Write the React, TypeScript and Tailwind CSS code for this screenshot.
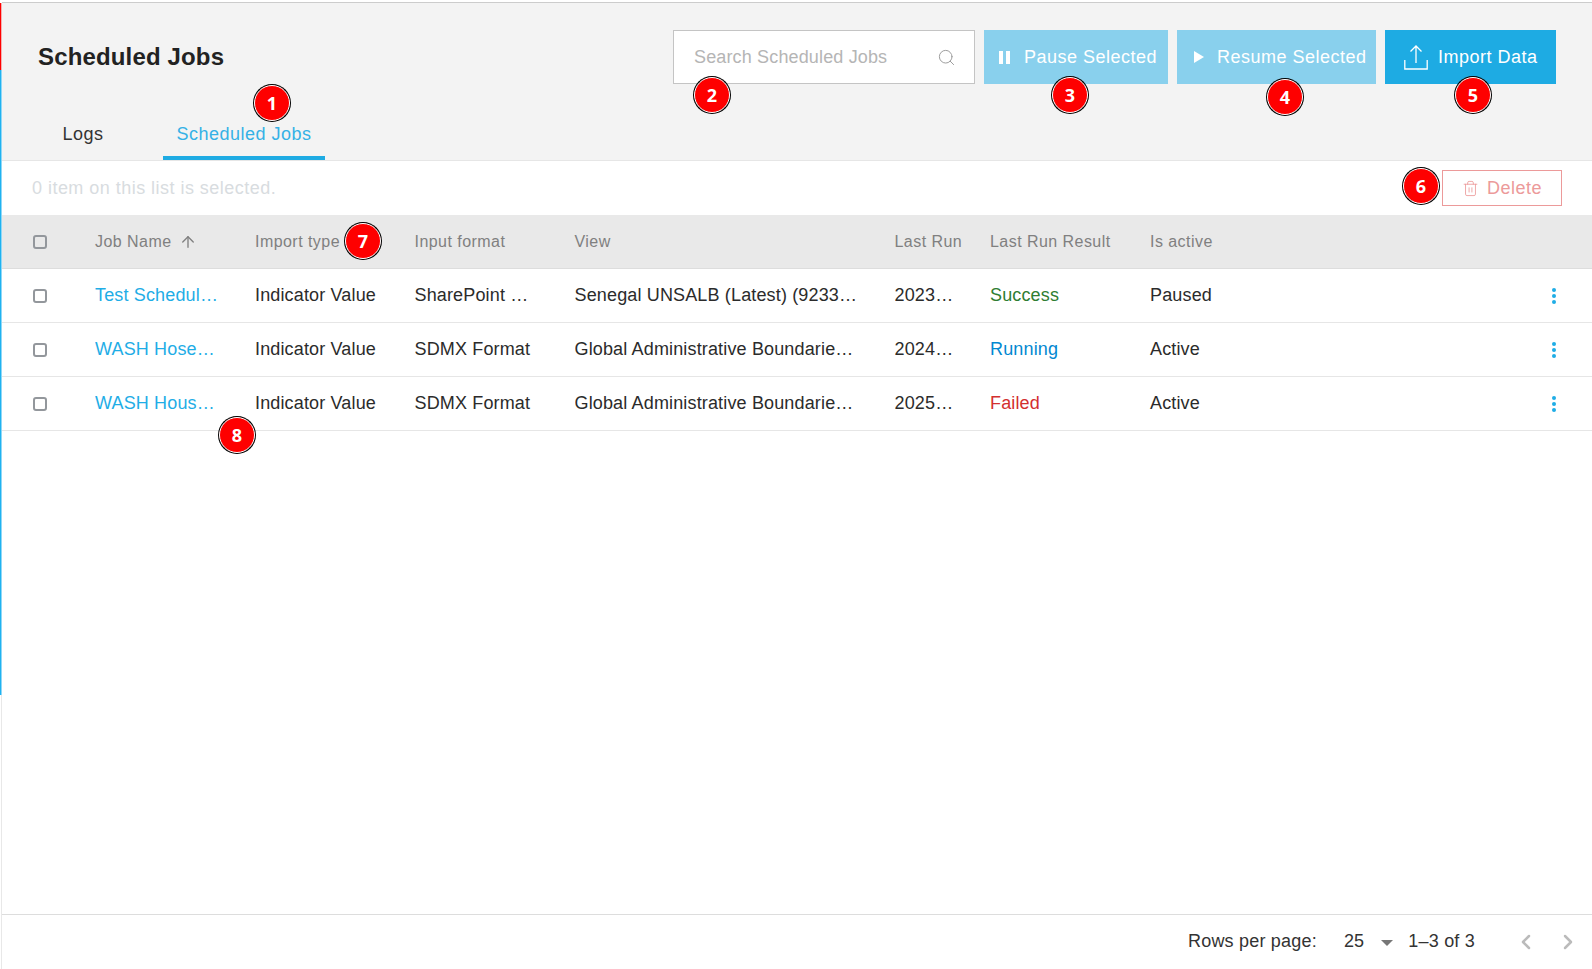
import { ArrowUp, ChevronLeft, ChevronRight, Search, Trash2 } from 'lucide-react'

const rows = [
    { name: 'Test Scheduled Job', format: 'SharePoint Online', view: 'Senegal UNSALB (Latest) (92331234)', run: '2023-11-02', result: 'Success', color: 'text-[#2e7d32]', active: 'Paused' },
    { name: 'WASH Hosehold Survey', format: 'SDMX Format', view: 'Global Administrative Boundaries (Latest)', run: '2024-05-14', result: 'Running', color: 'text-[#0288d1]', active: 'Active' },
    { name: 'WASH Household Survey', format: 'SDMX Format', view: 'Global Administrative Boundaries (Latest)', run: '2025-01-20', result: 'Failed', color: 'text-[#d32f2f]', active: 'Active' },
]

function Badge({ n, className }: { n: number; className: string }) {
    return (
        <div className={`absolute flex h-[36px] w-[36px] items-center justify-center rounded-full border border-white bg-[#fe0000] font-['Open_Sans'] text-[18px] font-bold tracking-normal text-white ring-1 ring-black ${className}`}>
            {n}
        </div>
    )
}

function Checkbox() {
    return <div className="h-[14px] w-[14px] rounded-[3px] border-2 border-[#93979c]" />
}

export default function App() {
    return (
        <div className="relative flex h-[969px] w-[1592px] overflow-hidden bg-white font-['Liberation_Sans',sans-serif] text-[#2b2b2b]">
            <div className="flex w-[2px] flex-col pt-[3px]">
                <div className="h-[67px] border-r border-[#f3b0b0] bg-[#f00]" />
                <div className="h-[625px] border-r border-[#8fd8f7] bg-[#1fb2f0]" />
                <div className="flex-1 border-r border-[#e8e8e8]" />
            </div>

            <div className="mt-[2px] flex min-w-0 flex-1 flex-col border-t border-[#ccc]">
                <div className="flex h-[158px] flex-col justify-between border-b border-[#e6e6e6] bg-[#f3f3f3]">
                    <div className="flex items-start justify-between pt-[27px] pr-[36px] pl-[36px]">
                        <h1 className="mt-[12px] text-[24px] leading-[30px] font-bold tracking-[0.15px] text-[#222]">Scheduled Jobs</h1>
                        <div className="flex gap-[9px] text-[18px] tracking-[0.5px] text-white">
                            <div className="flex h-[54px] w-[302px] items-center justify-between border border-[#c4c4c4] bg-white pr-[18px] pl-[20px] tracking-[0.15px] text-[#b5b5b5]">
                                Search Scheduled Jobs
                                <Search size={19} strokeWidth={1.2} className="text-[#999]" />
                            </div>
                            <button className="flex h-[54px] w-[184px] items-center bg-[#89d0ed] pl-[15px]">
                                <svg width="11" height="13" viewBox="0 0 11 13" fill="white" className="mr-[14px]"><rect width="4" height="13" /><rect x="7" width="4" height="13" /></svg>
                                Pause Selected
                            </button>
                            <button className="flex h-[54px] w-[199px] items-center bg-[#89d0ed] pl-[17px]">
                                <svg width="10" height="12" viewBox="0 0 10 12" fill="white" className="mr-[13px]"><path d="M0 0l10 6-10 6z" /></svg>
                                Resume Selected
                            </button>
                            <button className="flex h-[54px] w-[171px] items-center bg-[#1eabe3] pl-[19px]">
                                <svg width="24" height="25" viewBox="0 0 24 25" fill="none" stroke="white" strokeWidth="1.3" className="mr-[10px]">
                                    <path d="M12 18V1M6.500 6.500L12 1l5.500 5.500M0.800 15v9h22.400v-9" />
                                </svg>
                                Import Data
                            </button>
                        </div>
                    </div>
                    <div className="flex items-end text-[18px] tracking-[0.5px]">
                        <div className="flex h-[52px] w-[162px] items-center justify-center text-[#333]">Logs</div>
                        <div className="flex h-[52px] w-[162px] -translate-x-px items-center justify-center border-b-[4px] border-[#1eabe3] pt-[4px] text-[#35b1e6]">Scheduled Jobs</div>
                    </div>
                </div>

                <div className="flex h-[54px] items-center justify-between pr-[30px] pl-[30px] text-[18px] tracking-[0.47px] text-[#d8dce0]">
                    <span className="mt-[1px]">0 item on this list is selected.</span>
                    <button className="flex h-[36px] w-[120px] items-center justify-center gap-[8px] border border-[#ec9a9a] tracking-[0.5px] text-[#ec9a9a]">
                        <Trash2 size={17} strokeWidth={1.2} />
                        Delete
                    </button>
                </div>

                <div className="flex h-[54px] items-center border-b border-[#ddd] bg-[#e9e9e9] pt-[1px] text-[16px] tracking-[0.45px] text-[#808080]">
                    <div className="w-[93px] pl-[31px]"><Checkbox /></div>
                    <div className="flex w-[160px] items-center gap-[7px]">Job Name <ArrowUp size={18} strokeWidth={1.8} /></div>
                    <div className="w-[159.500px]">Import type</div>
                    <div className="w-[160px]">Input format</div>
                    <div className="w-[320px]">View</div>
                    <div className="w-[95.500px]">Last Run</div>
                    <div className="w-[160px]">Last Run Result</div>
                    <div>Is active</div>
                </div>

                {rows.map((row) => (
                    <div key={row.name} className="flex h-[54px] items-center border-b border-[#e6e6e6] text-[18px] tracking-[0.15px]">
                        <div className="w-[93px] pl-[31px]"><Checkbox /></div>
                        <div className="w-[160px] pr-[33px]"><div className="truncate text-[#1fade6]">{row.name}</div></div>
                        <div className="w-[159.500px]">Indicator Value</div>
                        <div className="w-[160px] pr-[33px]"><div className="truncate">{row.format}</div></div>
                        <div className="w-[320px] pr-[33px]"><div className="truncate">{row.view}</div></div>
                        <div className="w-[95.500px] pr-[33px]"><div className="truncate">{row.run}</div></div>
                        <div className={`w-[160px] ${row.color}`}>{row.result}</div>
                        <div className="flex-1">{row.active}</div>
                        <div className="mr-[36px] flex flex-col gap-[2px]">
                            <span className="h-[4px] w-[4px] rounded-full bg-[#1fade6]" />
                            <span className="h-[4px] w-[4px] rounded-full bg-[#1fade6]" />
                            <span className="h-[4px] w-[4px] rounded-full bg-[#1fade6]" />
                        </div>
                    </div>
                ))}

                <div className="flex-1" />

                <div className="flex h-[55px] items-center border-t border-[#ddd] pb-[1px] text-[18px] tracking-[0.2px] text-[#333]">
                    <div className="ml-[1186px]">Rows per page:</div>
                    <div className="ml-[27px]">25</div>
                    <svg width="12" height="6" viewBox="0 0 12 6" fill="#777" className="mt-[3px] ml-[17px]"><path d="M0 0h12l-6 6z" /></svg>
                    <div className="ml-[15px]">1–3 of 3</div>
                    <ChevronLeft size={24} strokeWidth={2.5} className="ml-[39px] text-[#bbb]" />
                    <ChevronRight size={24} strokeWidth={2.5} className="ml-[18px] text-[#bbb]" />
                </div>
            </div>

            <Badge n={1} className="top-[85px] left-[254px]" />
            <Badge n={2} className="top-[77px] left-[694px]" />
            <Badge n={3} className="top-[77px] left-[1052px]" />
            <Badge n={4} className="top-[79px] left-[1267px]" />
            <Badge n={5} className="top-[77px] left-[1455px]" />
            <Badge n={6} className="top-[168px] left-[1403px]" />
            <Badge n={7} className="top-[223px] left-[345px]" />
            <Badge n={8} className="top-[417px] left-[219px]" />
        </div>
    )
}
